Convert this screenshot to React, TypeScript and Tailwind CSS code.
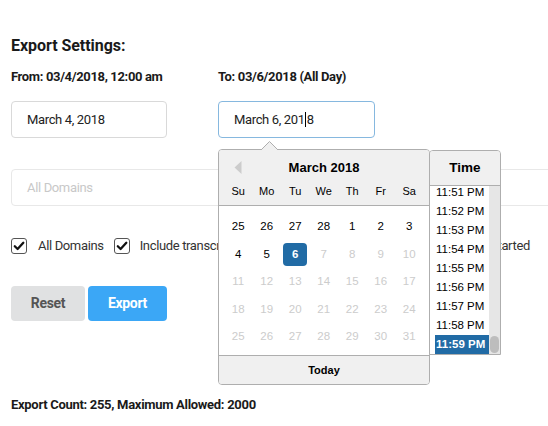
import React from "react";

const Check = () => (
  <div className="w-[16px] h-[16px] rounded-[3px] border-[1.5px] border-[#555] bg-white flex items-center justify-center shrink-0">
    <svg width="12" height="12" viewBox="0 0 12 12">
      <path d="M1.8 6.2 L4.6 9 L10.3 2.8" fill="none" stroke="#111" strokeWidth="2.3" strokeLinecap="round" strokeLinejoin="round" />
    </svg>
  </div>
);

const dayNames = ["Su", "Mo", "Tu", "We", "Th", "Fr", "Sa"];
const weeks: number[][] = [
  [25, 26, 27, 28, 1, 2, 3],
  [4, 5, 6, 7, 8, 9, 10],
  [11, 12, 13, 14, 15, 16, 17],
  [18, 19, 20, 21, 22, 23, 24],
  [25, 26, 27, 28, 29, 30, 31],
];
const times = ["11:51 PM", "11:52 PM", "11:53 PM", "11:54 PM", "11:55 PM", "11:56 PM", "11:57 PM", "11:58 PM", "11:59 PM"];

export default function App() {
  return (
    <div className="relative w-[548px] h-[426px] bg-white overflow-hidden text-[#222]" style={{ fontFamily: "Roboto, 'Liberation Sans', sans-serif" }}>
      <div className="pl-[11px] pt-[36px] flex flex-col">
        <div className="h-[20px] leading-[20px] text-[16px] font-bold tracking-[-0.05px] text-[#1a1a1a]">Export Settings:</div>
        <div className="mt-[13px] flex h-[16px] leading-[16px] text-[13px] font-bold tracking-[-0.35px] text-[#1a1a1a]">
          <div className="w-[207px]">From: 03/4/2018, 12:00 am</div>
          <div>To: 03/6/2018 (All Day)</div>
        </div>
        <div className="mt-[16px] flex">
          <div className="w-[207px]">
            <div className="w-[156px] h-[37px] rounded-[4px] border border-[#d9d9d9] flex items-center pl-[15px] text-[13px] tracking-[-0.35px] text-[#222]">March 4, 2018</div>
          </div>
          <div className="w-[157px] h-[37px] rounded-[4px] border border-[#86b8df] flex items-center pl-[15px] text-[13px] tracking-[-0.35px] text-[#222]">
            March 6, 201<span className="inline-block w-px h-[15px] bg-black mx-[0.5px]" />8
          </div>
        </div>
        <div className="mt-[31px] w-[560px] h-[37px] rounded-[4px] border border-[#e8e8e8] flex items-center pl-[15px] text-[13px] tracking-[-0.35px] text-[#c8c8c8]">All Domains</div>
        <div className="mt-[32px] h-[16px] flex items-center text-[13px] tracking-[-0.35px] text-[#333] whitespace-nowrap">
          <Check />
          <span className="ml-[11px]">All Domains</span>
          <div className="ml-[10px]"><Check /></div>
          <span className="ml-[10px]">Include transcripts only for all chats and conversations that have started</span>
        </div>
        <div className="mt-[32px] flex gap-[3px]">
          <button className="w-[74px] h-[35px] rounded-[4px] bg-[#e0e1e2] text-[#555] text-[14px] font-bold tracking-[-0.35px]">Reset</button>
          <button className="w-[79px] h-[35px] rounded-[4px] bg-[#3ba7f6] text-white text-[14px] font-bold tracking-[-0.35px]">Export</button>
        </div>
        <div className="mt-[76px] h-[16px] leading-[16px] text-[13px] font-bold tracking-[-0.3px] text-[#1a1a1a]">Export Count: 255, Maximum Allowed: 2000</div>
      </div>

      {/* Datepicker popup */}
      <div className="absolute left-[218px] top-[149px] w-[212px] h-[236px] rounded-[4px] border border-[#aeaeae] bg-white overflow-hidden flex flex-col" style={{ fontFamily: "'Liberation Sans', Arial, sans-serif" }}>
        <div className="relative h-[56px] shrink-0 bg-[#f0f0f0] border-b border-[#aeaeae]">
          <svg className="absolute left-[15px] top-[11px]" width="8" height="13" viewBox="0 0 8 13">
            <path d="M7.5 0 L0.5 6.5 L7.5 13 Z" fill="#cccccc" />
          </svg>
          <div className="absolute inset-x-0 top-[9px] text-center text-[13px] font-bold leading-[17px] text-black">March 2018</div>
          <div className="absolute left-[5px] top-[34px] w-[199.5px] grid grid-cols-7 text-[11px] leading-[14px] text-black">
            {dayNames.map((d) => (
              <div key={d} className="text-center">{d}</div>
            ))}
          </div>
        </div>
        <div className="flex-1 pt-[7px] pl-[5px]">
          {weeks.map((w, wi) => (
            <div key={wi} className="w-[199.5px] h-[27.5px] grid grid-cols-7">
              {w.map((d, di) => {
                const selected = wi === 1 && di === 2;
                const disabled = wi > 1 || (wi === 1 && di > 2);
                return (
                  <div key={di} className="flex items-center justify-center">
                    {selected ? (
                      <div className="w-[24px] h-[23px] rounded-[4px] bg-[#216ba5] text-white font-bold text-[11.5px] leading-none flex items-center justify-center">{d}</div>
                    ) : (
                      <span className={`text-[11.5px] leading-none ${disabled ? "text-[#cccccc]" : "text-black"}`}>{d}</span>
                    )}
                  </div>
                );
              })}
            </div>
          ))}
        </div>
        <div className="h-[29px] shrink-0 bg-[#f0f0f0] border-t border-[#aeaeae] flex items-center justify-center text-[11px] font-bold text-black">Today</div>
      </div>

      {/* triangle */}
      <svg className="absolute left-[261px] top-[141px]" width="17" height="9" viewBox="0 0 17 9">
        <path d="M0 9 L8.5 0.5 L17 9 Z" fill="#f0f0f0" />
        <path d="M0 9 L8.5 0.5 L17 9" fill="none" stroke="#aeaeae" strokeWidth="1" />
      </svg>
      <div className="absolute left-[262px] top-[149px] w-[15px] h-[2px] bg-[#f0f0f0]" />

      {/* Time panel */}
      <div className="absolute left-[429px] top-[150px] w-[72px] h-[205px] rounded-t-[4px] border border-[#aeaeae] bg-white overflow-hidden flex flex-col" style={{ fontFamily: "'Liberation Sans', Arial, sans-serif" }}>
        <div className="h-[35px] shrink-0 bg-[#f0f0f0] border-b border-[#aeaeae] flex items-center justify-center text-[13.5px] font-bold text-black">Time</div>
        <div className="relative flex-1 overflow-hidden flex">
          <div className="w-[59px] pl-[5px] flex flex-col justify-end overflow-hidden">
            {times.map((t) => (
              <div key={t} className={`h-[19px] shrink-0 flex items-center pl-[1px] text-[11.5px] ${t === "11:59 PM" ? "bg-[#216ba5] text-white font-bold" : "text-black"}`}>{t}</div>
            ))}
          </div>
          <div className="w-[11px] bg-[#e6e6e6] flex flex-col justify-end items-center pb-[1px]">
            <div className="w-[9px] h-[17px] rounded-full bg-[#bdbdbd]" />
          </div>
        </div>
      </div>
    </div>
  );
}
